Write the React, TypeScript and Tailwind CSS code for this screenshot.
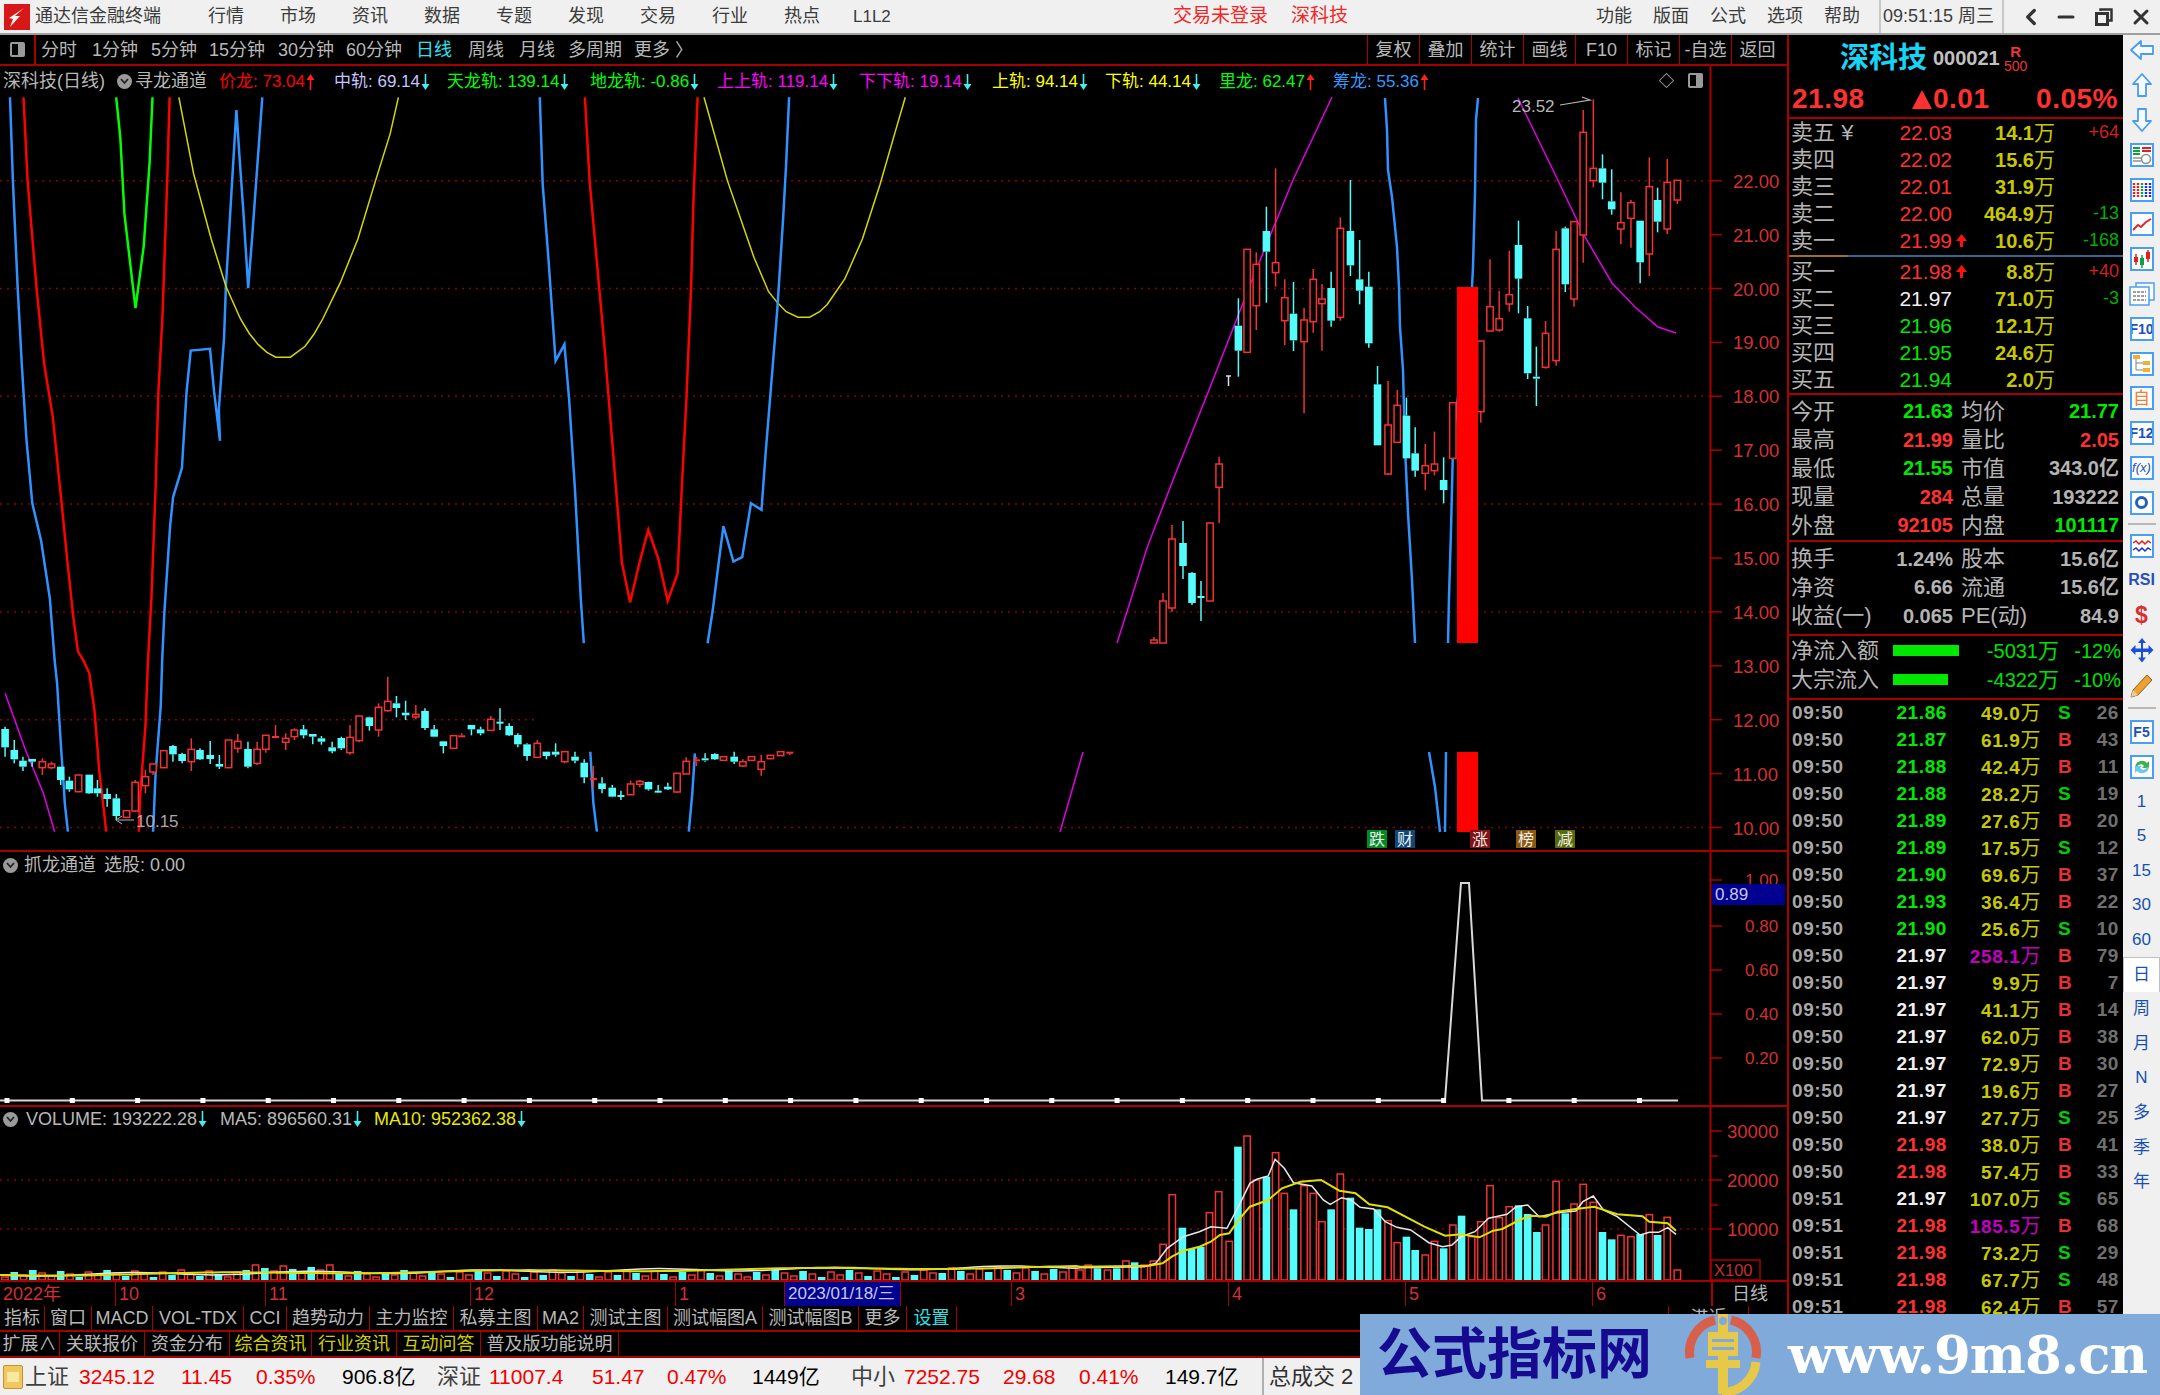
// App.tsx - stock terminal K-line screen
import React from "react";
import { ChevronLeft, Minus, X } from "lucide-react";

type Pt = [number, number];
type Candle = [number, number, number, number, number, number];

const z11 = (p: Pt): Pt => [p[0] * 0.5867, 90 + p[1] * 0.3635];
const z9 = (p: Pt): Pt => [p[0] / 1.96, 660 + p[1] / 3];
const z10 = (p: Pt): Pt => [1080 + p[0] / 2.178, 1100 + p[1] / 3];
const pts = (list: Pt[]) => list.map((p) => `${p[0].toFixed(1)},${p[1].toFixed(1)}`).join(" ");

const BLUE = "#2f93ff";
const RED = "#ff0000";
const MAG = "#e000e0";
const YEL = "#d8d800";
const CY = "#54fcfc";
const CR = "#f03232";

const mainLines: { c: string; w: number; p: Pt[] }[] = [
  { c: BLUE, w: 2.5, p: [...([[17, 20], [22, 250], [30, 540], [37, 750], [45, 960], [55, 1137], [70, 1240], [85, 1400], [93, 1568]] as Pt[]).map(z11), ...([[112, 70], [115, 150], [120, 270], [125, 380], [127, 430], [133, 515]] as Pt[]).map(z9)] },
  { c: RED, w: 2.5, p: [...([[40, 20], [47, 250], [62, 540], [75, 750], [90, 900], [105, 1137], [115, 1300], [125, 1450], [133, 1545], [142, 1568]] as Pt[]).map(z11), ...([[175, 40], [185, 150], [195, 340], [205, 470], [208, 515]] as Pt[]).map(z9)] },
  { c: RED, w: 2.5, p: [...([[272, 515], [275, 400], [285, 200], [290, 0]] as Pt[]).map(z9), ...([[258, 1400], [265, 1100], [270, 830], [277, 620], [285, 250], [289, 20]] as Pt[]).map(z11)] },
  { c: BLUE, w: 2.5, p: [...([[300, 515], [305, 340], [315, 140], [318, 0]] as Pt[]).map(z9), ...([[280, 1440], [290, 1200], [295, 1120], [310, 1040], [318, 830], [325, 717], [358, 712], [365, 830], [375, 965], [373, 880], [382, 680], [385, 540], [395, 270], [403, 55], [408, 180], [415, 340], [423, 545], [430, 400], [438, 220], [447, 20]] as Pt[]).map(z11)] },
  { c: "#00ff00", w: 2.5, p: ([[198, 20], [205, 130], [212, 340], [225, 520], [231, 600], [245, 430], [255, 200], [260, 20]] as Pt[]).map(z11) },
  { c: YEL, w: 1.5, p: ([[305, 20], [330, 230], [360, 410], [385, 540], [410, 630], [425, 670], [440, 700], [455, 722], [470, 735], [495, 735], [520, 705], [535, 672], [550, 630], [580, 530], [610, 410], [640, 250], [665, 120], [679, 20]] as Pt[]).map(z11) },
  { c: YEL, w: 1.5, p: ([[1200, 20], [1240, 250], [1285, 460], [1310, 555], [1325, 585], [1340, 610], [1360, 625], [1380, 625], [1397, 610], [1410, 590], [1440, 520], [1470, 410], [1500, 260], [1525, 120], [1543, 20]] as Pt[]).map(z11) },
  { c: BLUE, w: 2.5, p: ([[920, 20], [925, 260], [935, 470], [945, 700], [947, 745], [962, 700], [970, 850], [980, 1100], [985, 1250], [990, 1400], [995, 1522]] as Pt[]).map(z11) },
  { c: RED, w: 2.5, p: ([[997, 20], [1005, 250], [1020, 520], [1030, 700], [1040, 900], [1052, 1137], [1060, 1300], [1074, 1410], [1090, 1300], [1105, 1210], [1122, 1290], [1138, 1405], [1155, 1330], [1162, 1100], [1170, 850], [1178, 540], [1182, 300], [1189, 20]] as Pt[]).map(z11) },
  { c: BLUE, w: 2.5, p: ([[1206, 1522], [1215, 1430], [1225, 1300], [1233, 1200], [1250, 1297], [1265, 1285], [1280, 1137], [1298, 1155], [1305, 1000], [1315, 800], [1325, 600], [1335, 350], [1340, 200], [1345, 20]] as Pt[]).map(z11) },
  { c: BLUE, w: 2.5, p: ([[1157, 275], [1163, 430], [1170, 515]] as Pt[]).map(z9) },
  { c: BLUE, w: 2.5, p: ([[1350, 515], [1357, 400], [1362, 280]] as Pt[]).map(z9) },
  { c: MAG, w: 1.5, p: ([[10, 100], [50, 270], [85, 400], [107, 515]] as Pt[]).map(z9) },
  { c: MAG, w: 1.5, p: [[1060, 832], [1083, 752]] },
  { c: MAG, w: 1.5, p: [[1117, 643], [1137, 580], [1147, 548], [1173, 480], [1209, 390], [1252, 280], [1293, 180], [1332, 97]] },
  { c: MAG, w: 1.5, p: [[1518, 98], [1553, 170], [1585, 237], [1612, 283], [1635, 307], [1658, 327], [1676, 333]] },
  { c: BLUE, w: 2.5, p: [[1385, 98], [1387, 130], [1388, 170], [1392, 197], [1397, 247], [1399, 287], [1400, 327], [1403, 370], [1405, 447], [1408, 513], [1412, 580], [1415, 643]] },
  { c: BLUE, w: 2.5, p: [[1429, 752], [1435, 787], [1440, 832]] },
  { c: BLUE, w: 2.5, p: [[1445, 832], [1446, 752]] },
  { c: BLUE, w: 2.5, p: [[1448, 643], [1449, 597], [1451, 530], [1453, 447], [1456, 413], [1472, 287], [1473, 267], [1475, 193], [1476, 120], [1478, 98]] },
];

// x, wick top, body top, body bottom, wick bottom, 1 = red
const leftCandles: number[][] = [
  [10, 200, 207, 262, 290, 0], [28, 240, 270, 298, 310, 0], [45, 290, 302, 320, 333, 0], [63, 297, 297, 305, 320, 0], [83, 295, 305, 323, 345, 1], [101, 305, 312, 323, 328, 1], [119, 320, 320, 360, 375, 0], [136, 350, 362, 388, 395, 0], [154, 345, 345, 395, 397, 1], [175, 344, 344, 400, 402, 0], [191, 360, 385, 400, 410, 0], [210, 385, 402, 417, 440, 0], [228, 402, 415, 468, 480, 0], [248, 452, 452, 472, 475, 1], [265, 360, 367, 453, 455, 1], [285, 330, 350, 377, 400, 1], [300, 312, 312, 336, 345, 1], [321, 270, 272, 323, 324, 1], [339, 255, 258, 283, 305, 0], [357, 278, 282, 303, 310, 0], [375, 235, 268, 305, 333, 1], [392, 265, 270, 298, 300, 0], [412, 243, 285, 297, 312, 0], [430, 285, 312, 320, 327, 0], [448, 240, 240, 323, 325, 1], [466, 222, 244, 265, 278, 1], [486, 245, 267, 320, 325, 0], [504, 245, 268, 310, 315, 1], [521, 225, 226, 268, 278, 1], [540, 195, 228, 233, 235, 1], [560, 220, 235, 247, 270, 1], [577, 205, 210, 230, 240, 1], [595, 195, 208, 226, 235, 0], [613, 222, 222, 230, 253, 0], [630, 228, 235, 245, 254, 0], [651, 245, 262, 274, 280, 0], [669, 230, 234, 265, 270, 0], [686, 195, 232, 278, 284, 1], [704, 168, 168, 242, 247, 1], [724, 170, 172, 198, 212, 0], [742, 130, 142, 210, 230, 1], [760, 50, 124, 152, 155, 1], [777, 108, 130, 144, 172, 0], [795, 122, 158, 166, 180, 0], [815, 135, 163, 171, 178, 1], [833, 145, 153, 204, 210, 0], [851, 195, 208, 230, 232, 0], [869, 243, 244, 258, 280, 0], [889, 225, 227, 265, 267, 1], [905, 220, 226, 229, 231, 1], [924, 195, 195, 208, 226, 0], [942, 200, 208, 220, 226, 0], [962, 168, 178, 211, 213, 1], [980, 145, 185, 190, 210, 0], [998, 190, 198, 226, 228, 0], [1015, 220, 225, 253, 262, 0], [1033, 250, 253, 288, 302, 0], [1053, 240, 250, 292, 294, 1], [1071, 275, 275, 288, 298, 0], [1089, 250, 275, 284, 290, 0], [1107, 275, 275, 305, 310, 1], [1127, 275, 290, 302, 310, 0], [1145, 298, 308, 352, 370, 0], [1163, 318, 354, 356, 385, 1], [1180, 352, 370, 387, 400, 0], [1200, 375, 383, 410, 412, 0], [1217, 392, 405, 409, 420, 0], [1236, 362, 372, 404, 406, 1], [1254, 360, 364, 373, 382, 1], [1271, 365, 366, 388, 392, 0], [1290, 375, 392, 396, 397, 0], [1309, 368, 380, 388, 390, 0], [1327, 338, 340, 396, 398, 1], [1345, 292, 304, 342, 343, 1], [1365, 290, 298, 305, 318, 1], [1382, 280, 295, 302, 305, 0], [1401, 280, 282, 298, 300, 0], [1418, 288, 290, 301, 302, 1], [1439, 275, 290, 305, 312, 0], [1456, 298, 305, 318, 320, 1], [1473, 290, 290, 301, 302, 1], [1492, 285, 305, 328, 347, 1], [1510, 285, 286, 296, 298, 1], [1530, 275, 275, 287, 288, 1], [1548, 275, 275, 280, 285, 1],
];

const rightCandles: number[][] = [
  [345, 655, 737, 812, 890, 0], [364, 508, 508, 817, 817, 1], [384, 517, 553, 677, 750, 1], [406, 380, 453, 515, 668, 0], [426, 265, 548, 578, 620, 1], [446, 598, 653, 722, 795, 1], [465, 606, 701, 781, 813, 0], [488, 683, 720, 785, 1000, 1], [508, 567, 598, 725, 758, 1], [527, 612, 657, 671, 812, 1], [547, 575, 624, 722, 740, 0], [567, 412, 445, 712, 722, 1], [589, 300, 453, 556, 588, 0], [609, 480, 598, 632, 673, 0], [629, 575, 620, 790, 803, 0], [648, 858, 913, 1096, 1096, 0], [671, 903, 1035, 1182, 1185, 1], [691, 930, 976, 1087, 1087, 1], [711, 953, 1007, 1135, 1135, 0], [730, 1042, 1120, 1172, 1190, 0], [752, 1092, 1157, 1180, 1230, 1], [772, 1055, 1152, 1172, 1186, 1], [792, 1132, 1200, 1230, 1270, 0], [812, 968, 968, 1135, 1135, 1], [873, 783, 783, 995, 1028, 1], [893, 538, 680, 753, 753, 1], [913, 633, 716, 750, 755, 1], [935, 512, 644, 672, 695, 1], [955, 422, 495, 596, 700, 0], [975, 678, 715, 880, 897, 0], [994, 800, 890, 897, 978, 0], [1014, 723, 760, 862, 866, 1], [1037, 453, 508, 842, 857, 1], [1057, 440, 445, 613, 636, 0], [1076, 422, 425, 657, 680, 1], [1096, 90, 157, 465, 548, 1], [1118, 58, 265, 302, 322, 1], [1138, 223, 265, 308, 358, 0], [1158, 268, 364, 388, 404, 0], [1178, 337, 428, 447, 493, 1], [1200, 360, 368, 415, 503, 1], [1220, 422, 422, 547, 610, 0], [1240, 232, 320, 522, 588, 1], [1258, 323, 360, 425, 457, 0], [1279, 237, 307, 447, 462, 1], [1301, 301, 301, 360, 372, 1], [303, 1130, 1152, 1222, 1330, 1],
];

const lowCandles: Candle[] = [
  [1154, 637, 640, 643, 643, 1], [1163, 593, 601, 643, 643, 1], [1172, 525, 539, 608, 612, 1], [1183, 521, 543, 566, 579, 0], [1192, 572, 573, 603, 605, 0], [1201, 581, 596, 598, 621, 0], [1210, 523, 523, 601, 601, 1],
];

const candleList: Candle[] = [
  ...leftCandles.map((c) => [c[0] / 1.96, ...[c[1], c[2], c[3], c[4]].map((y) => 660 + y / 3), c[5]] as Candle),
  ...rightCandles.map((c) => [1080 + c[0] / 2.178, ...[c[1], c[2], c[3], c[4]].map((y) => Math.max(97, 80 + y / 3)), c[5]] as Candle),
  ...lowCandles,
];

const CandleMark = ({ c }: { c: Candle }) => {
  const [x, wt, bt, bb, wb, up] = c;
  const color = up ? CR : CY;
  const flat = bb - bt < 2.5;
  return (
    <g>
      <line x1={x} x2={x} y1={wt} y2={bt} stroke={color} strokeWidth="1.5" />
      <line x1={x} x2={x} y1={bb} y2={wb} stroke={color} strokeWidth="1.5" />
      {flat ? (
        <rect x={x - 3.5} y={bt} width="7" height="2" fill={color} />
      ) : up ? (
        <rect x={x - 3.2} y={bt} width="6.4" height={bb - bt} fill="#000" stroke={color} strokeWidth="1.5" />
      ) : (
        <rect x={x - 3.8} y={bt} width="7.6" height={bb - bt} fill={color} />
      )}
    </g>
  );
};

const priceY = (p: number) => 180.7 + (22 - p) * 53.9;
const prices = [22, 21, 20, 19, 18, 17, 16, 15, 14, 13, 12, 11, 10];
const newsTags = [
  { t: "跌", x: 1367, bg: "#008a20" },
  { t: "财", x: 1395, bg: "#0e4878" },
  { t: "涨", x: 1470, bg: "#801414" },
  { t: "榜", x: 1516, bg: "#8a5a10" },
  { t: "减", x: 1555, bg: "#5a6a08" },
];

const MainChart = () => (
  <svg className="block" width="1787" height="786" viewBox="0 66 1787 786">
    <line x1="1710.5" x2="1710.5" y1="66" y2="851" stroke="#a80000" strokeWidth="2" />
    {[22, 20, 18, 16, 14, 10].map((p) => (
      <line key={p} x1="0" x2="1710" y1={priceY(p)} y2={priceY(p)} stroke="#8c0000" strokeWidth="1.5" strokeDasharray="2 5" />
    ))}
    <line x1="0" x2="538" y1={priceY(12)} y2={priceY(12)} stroke="#8c0000" strokeWidth="1.5" strokeDasharray="2 5" />
    {mainLines.map((l, i) => (
      <polyline key={i} points={pts(l.p)} fill="none" stroke={l.c} strokeWidth={l.w} />
    ))}
    {candleList.map((c, i) => (
      <CandleMark key={i} c={c} />
    ))}
    <rect x="1457" y="287" width="21" height="356" fill="#ff0000" />
    <rect x="1457" y="752" width="21" height="80" fill="#ff0000" />
    {prices.map((p) => (
      <g key={p}>
        <line x1="1711" x2="1722" y1={priceY(p)} y2={priceY(p)} stroke="#a80000" strokeWidth="1.5" />
        <text x="1733" y={priceY(p) + 7} fontSize="18.5" fill="#d23030">
          {p.toFixed(2)}
        </text>
      </g>
    ))}
    <line x1="1226" x2="1231" y1="376" y2="376" stroke="#e0e0e0" strokeWidth="1.5" />
    <line x1="1228.5" x2="1228.5" y1="376" y2="386" stroke="#e0e0e0" strokeWidth="1.5" />
    <text x="1512" y="112" fontSize="17" fill="#b8b8b8">23.52</text>
    <polyline points="1560,105 1590,100 1582,97" fill="none" stroke="#b8b8b8" strokeWidth="1.2" />
    <line x1="118" x2="134" y1="820" y2="820" stroke="#b8b8b8" strokeWidth="1" />
    <polyline points="122,816 116,820 122,824" fill="none" stroke="#b8b8b8" strokeWidth="1" />
    <text x="136" y="827" fontSize="17" fill="#a8a8a8">10.15</text>
    {newsTags.map((n) => (
      <g key={n.t}>
        <rect x={n.x} y="830" width="20" height="18" fill={n.bg} />
        <text x={n.x + 2} y="845" fontSize="16" fill="#f0f0f0">
          {n.t}
        </text>
      </g>
    ))}
    <line x1="0" x2="1787" y1="851" y2="851" stroke="#a80000" strokeWidth="2" />
  </svg>
);

const SubChart = () => {
  const squares = Array.from({ length: 26 }, (_, i) => 7 + 65.3 * i).filter((x) => x < 1660 && !(x > 1450 && x < 1480));
  return (
    <svg className="block" width="1787" height="255" viewBox="0 852 1787 255">
      <line x1="1710.5" x2="1710.5" y1="852" y2="1106" stroke="#a80000" strokeWidth="2" />
      <polyline points="0,1100.5 1445,1100.5 1461,883 1469,883 1482,1100.5 1678,1100.5" fill="none" stroke="#d8d8d8" strokeWidth="2" />
      {squares.map((x) => (
        <rect key={x} x={x - 2.5} y="1098" width="5" height="5" fill="#fff" />
      ))}
      {[
        ["1.00", 880],
        ["0.80", 926],
        ["0.60", 970],
        ["0.40", 1014],
        ["0.20", 1058],
      ].map(([t, y]) => (
        <g key={t as string}>
          <line x1="1711" x2="1722" y1={y as number} y2={y as number} stroke="#a80000" strokeWidth="1.5" />
          <text x="1745" y={(y as number) + 6} fontSize="17" fill="#d23030">
            {t}
          </text>
        </g>
      ))}
      <rect x="1712" y="884" width="73" height="21" fill="#000090" />
      <text x="1715" y="900" fontSize="17" fill="#c8c8e8">0.89</text>
      <line x1="0" x2="1787" y1="1106" y2="1106" stroke="#a80000" strokeWidth="2" />
    </svg>
  );
};

const rightBars: number[][] = [
  [0, 510, 1], [18, 495, 1], [38, 505, 0], [60, 510, 1], [80, 505, 0], [100, 483, 1], [119, 487, 0], [140, 495, 1], [160, 483, 1], [181, 433, 1], [201, 284, 1], [223, 383, 0], [243, 447, 0], [263, 440, 0], [282, 338, 1], [302, 275, 1], [325, 424, 1], [344, 140, 0], [364, 108, 1], [384, 240, 1], [406, 230, 0], [426, 158, 1], [445, 280, 1], [465, 328, 0], [488, 257, 1], [508, 280, 1], [527, 365, 1], [547, 328, 0], [567, 222, 1], [589, 293, 0], [609, 383, 0], [629, 387, 0], [648, 328, 0], [671, 362, 1], [691, 428, 1], [711, 410, 0], [730, 450, 0], [752, 465, 1], [772, 424, 1], [792, 445, 0], [812, 375, 1], [831, 347, 0], [853, 410, 1], [873, 365, 1], [893, 257, 1], [913, 353, 1], [935, 320, 1], [955, 316, 0], [975, 342, 0], [995, 396, 0], [1014, 375, 1], [1037, 244, 1], [1057, 340, 0], [1076, 312, 1], [1096, 253, 1], [1118, 307, 1], [1138, 396, 0], [1158, 418, 0], [1178, 406, 1], [1200, 410, 1], [1220, 402, 0], [1240, 344, 1], [1258, 405, 0], [1279, 352, 1], [1301, 510, 1],
];
const ma5: Pt[] = [[0, 503], [140, 500], [165, 490], [190, 445], [225, 410], [260, 395], [285, 380], [320, 385], [345, 320], [370, 250], [385, 238], [410, 228], [425, 178], [445, 205], [465, 248], [505, 258], [530, 300], [545, 313], [570, 293], [590, 300], [610, 322], [640, 327], [665, 365], [690, 382], [720, 390], [760, 428], [790, 440], [810, 435], [830, 410], [860, 395], [890, 355], [930, 343], [950, 320], [975, 315], [1000, 350], [1040, 338], [1080, 333], [1095, 305], [1118, 288], [1140, 330], [1170, 350], [1220, 405], [1240, 397], [1260, 397], [1280, 383], [1298, 403]];
const ma10: Pt[] = [[0, 500], [150, 497], [180, 490], [200, 470], [225, 452], [260, 440], [285, 425], [305, 405], [325, 400], [345, 360], [370, 320], [410, 300], [440, 265], [480, 245], [525, 240], [565, 272], [600, 280], [630, 313], [670, 322], [720, 358], [750, 380], [795, 407], [830, 403], [870, 412], [900, 392], [920, 387], [960, 358], [985, 347], [1015, 350], [1040, 335], [1080, 327], [1120, 320], [1170, 343], [1225, 349], [1240, 365], [1280, 370], [1298, 392]];

const VolumeChart = () => {
  const leftBars = Array.from({ length: 116 }, (_, i) => ({
    x: 5 + 9.28 * i,
    h: 3 + ((i * 37) % 8) + (i > 25 && i < 36 ? 5 : 0) + (i > 100 ? 3 : 0),
    red: (i * 13) % 5 < 3,
  }));
  const leftLine = (a: number, b: number) =>
    Array.from({ length: 117 }, (_, i): Pt => [9.28 * i, 1275 - (i / 116) * 8 + a * Math.sin(i / b)]);
  return (
    <svg className="block" width="1787" height="175" viewBox="0 1107 1787 175">
      <line x1="1710.5" x2="1710.5" y1="1107" y2="1282" stroke="#a80000" strokeWidth="2" />
      {[1180, 1229].map((y) => (
        <line key={y} x1="0" x2="1710" y1={y} y2={y} stroke="#8c0000" strokeWidth="1.5" strokeDasharray="2 5" />
      ))}
      {leftBars.map((b) =>
        b.red ? (
          <rect key={b.x} x={b.x - 3.2} y={1280 - b.h} width="6.4" height={b.h} fill="#000" stroke={CR} strokeWidth="1.5" />
        ) : (
          <rect key={b.x} x={b.x - 3.8} y={1280 - b.h} width="7.6" height={b.h} fill={CY} />
        )
      )}
      {rightBars.map((b) => {
        const [x, y] = z10([b[0], b[1]]);
        return b[2] ? (
          <rect key={b[0]} x={x - 3.2} y={y} width="6.4" height={1280 - y} fill="#000" stroke={CR} strokeWidth="1.5" />
        ) : (
          <rect key={b[0]} x={x - 3.8} y={y} width="7.6" height={1280 - y} fill={CY} />
        );
      })}
      <polyline points={pts([...leftLine(1.5, 3), ...ma5.map(z10)])} fill="none" stroke="#e8e8e8" strokeWidth="1.5" />
      <polyline points={pts([...leftLine(1, 5), ...ma10.map(z10)])} fill="none" stroke="#e0e000" strokeWidth="2" />
      {[
        ["30000", 1131],
        ["20000", 1180],
        ["10000", 1229],
      ].map(([t, y]) => (
        <g key={t as string}>
          <line x1="1711" x2="1722" y1={y as number} y2={y as number} stroke="#a80000" strokeWidth="1.5" />
          <text x="1727" y={(y as number) + 7} fontSize="18.5" fill="#d23030">
            {t}
          </text>
        </g>
      ))}
      <line x1="1711" x2="1718" y1="1156" y2="1156" stroke="#a80000" strokeWidth="1.5" />
      <line x1="1711" x2="1718" y1="1205" y2="1205" stroke="#a80000" strokeWidth="1.5" />
      <rect x="1711" y="1260" width="49" height="20" fill="#000" stroke="#a80000" strokeWidth="1.5" />
      <text x="1714" y="1276" fontSize="16.5" fill="#c03030">X100</text>
      <line x1="0" x2="1787" y1="1281" y2="1281" stroke="#a80000" strokeWidth="2" />
    </svg>
  );
};

const Dot = () => (
  <span className="flex h-[15px] w-[15px] items-center justify-center rounded-full bg-[#9a9a9a]">
    <svg width="9" height="7" viewBox="0 0 9 7">
      <polyline points="1,1 4.5,5 8,1" fill="none" stroke="#222" strokeWidth="1.8" />
    </svg>
  </span>
);

const Arw = ({ up }: { up?: boolean }) => (
  <svg className="ml-[1px] inline-block shrink-0" width="9" height="18" viewBox="0 0 9 18">
    <path d={up ? "M4.5 1 L8.5 7 H5.3 V17 H3.7 V7 H0.5 Z" : "M4.5 17 L8.5 11 H5.3 V1 H3.7 V11 H0.5 Z"} fill={up ? "#ff2020" : "#40f0f0"} />
  </svg>
);

const TopBar = () => (
  <div className="flex h-[35px] items-center border-b-2 border-[#a0a0a0] bg-[#f0f0f0] text-[18px] text-[#3c3c3c]">
    <svg className="ml-[4px]" width="26" height="26" viewBox="0 0 26 26">
      <rect width="26" height="26" fill="#d81818" />
      <path d="M20 4 L11 12 L16 12 L6 23 L9 15 L5 14 Z" fill="#f4f4f4" />
    </svg>
    <span className="ml-[5px] w-[173px]">通达信金融终端</span>
    <div className="flex gap-[36px]">
      {["行情", "市场", "资讯", "数据", "专题", "发现", "交易", "行业", "热点"].map((m) => (
        <span key={m}>{m}</span>
      ))}
    </div>
    <span className="ml-[33px] w-[320px] text-[17px]">L1L2</span>
    <span className="w-[118px] text-[19px] text-[#f02828]">交易未登录</span>
    <span className="w-[305px] text-[19px] text-[#f02828]">深科技</span>
    <div className="flex gap-[21px]">
      {["功能", "版面", "公式", "选项", "帮助"].map((m) => (
        <span key={m}>{m}</span>
      ))}
    </div>
    <div className="ml-[19px] flex h-full w-[125px] items-center whitespace-nowrap border-x-2 border-[#c8c8c8] pl-[2px] text-[18px]">
      09:51:15&nbsp;周三
    </div>
    <ChevronLeft className="ml-[14px]" size={26} strokeWidth={3} color="#333" />
    <Minus className="ml-[10px]" size={24} strokeWidth={3} color="#333" />
    <svg className="ml-[17px]" width="18" height="18" viewBox="0 0 18 18">
      <rect x="1.5" y="5.5" width="11" height="11" fill="none" stroke="#333" strokeWidth="3" />
      <path d="M5.5 3 V1.5 H16.5 V12.5 H14" fill="none" stroke="#333" strokeWidth="2.5" />
    </svg>
    <X className="ml-[16px]" size={24} strokeWidth={3} color="#333" />
  </div>
);

const periods = [
  { t: "分时", w: "w-[51px]" },
  { t: "1分钟", w: "w-[59px]" },
  { t: "5分钟", w: "w-[58px]" },
  { t: "15分钟", w: "w-[69px]" },
  { t: "30分钟", w: "w-[68px]" },
  { t: "60分钟", w: "w-[70px]" },
  { t: "日线", w: "w-[52px]", on: true },
  { t: "周线", w: "w-[51px]" },
  { t: "月线", w: "w-[49px]" },
  { t: "多周期", w: "w-[66px]" },
  { t: "更多 〉", w: "w-[60px]" },
];

const PeriodBar = () => (
  <div className="flex h-[31px] items-center border-b-2 border-[#a80000] bg-black text-[18px] text-[#b8b8b8]">
    <div className="flex h-full w-[36px] items-center justify-center border-r-2 border-[#a80000]">
      <span className="flex h-[15px] w-[15px] justify-end rounded-[2px] border-2 border-[#9a9a9a]">
        <span className="w-[5px] bg-[#9a9a9a]" />
      </span>
    </div>
    <div className="ml-[5px] flex whitespace-nowrap pt-[2px]">
      {periods.map((p) => (
        <span key={p.t} className={`${p.w} ${p.on ? "text-[#30e0f0]" : ""}`}>
          {p.t}
        </span>
      ))}
    </div>
    <div className="ml-auto mr-[4px] flex h-full">
      {["复权", "叠加", "统计", "画线", "F10", "标记", "-自选", "返回"].map((t) => (
        <span key={t} className="flex w-[52px] items-center justify-center whitespace-nowrap border-l border-[#a80000] pt-[2px]">
          {t}
        </span>
      ))}
    </div>
  </div>
);

const legendItems = [
  { n: "价龙", v: "73.04", c: "text-[#ff0000]", w: "w-[115px]", up: true },
  { n: "中轨", v: "69.14", c: "text-[#c4c4ff]", w: "w-[113px]" },
  { n: "天龙轨", v: "139.14", c: "text-[#00ff00]", w: "w-[143px]" },
  { n: "地龙轨", v: "-0.86", c: "text-[#00ff00]", w: "w-[127px]" },
  { n: "上上轨", v: "119.14", c: "text-[#ff00ff]", w: "w-[142px]" },
  { n: "下下轨", v: "19.14", c: "text-[#ff00ff]", w: "w-[133px]" },
  { n: "上轨", v: "94.14", c: "text-[#ffff00]", w: "w-[113px]" },
  { n: "下轨", v: "44.14", c: "text-[#ffff00]", w: "w-[114px]" },
  { n: "里龙", v: "62.47", c: "text-[#00ff00]", w: "w-[114px]", up: true },
  { n: "筹龙", v: "55.36", c: "text-[#3399ff]", w: "w-[114px]", up: true },
];

const MainLegend = () => (
  <div className="absolute left-0 top-0 flex h-[31px] w-[1710px] items-center whitespace-nowrap text-[17px] text-[#b8b8b8]">
    <span className="ml-[3px] w-[114px] text-[18px]">深科技(日线)</span>
    <Dot />
    <span className="ml-[3px] w-[84px] text-[18px]">寻龙通道</span>
    {legendItems.map((l) => (
      <span key={l.n} className={`${l.w} flex items-center ${l.c}`}>
        {l.n}: {l.v}
        <Arw up={l.up} />
      </span>
    ))}
    <span className="absolute left-[1661px] top-[9px] h-[11px] w-[11px] rotate-45 border border-[#888]" />
    <span className="absolute left-[1688px] top-[7px] flex h-[15px] w-[15px] justify-end rounded-[2px] border-2 border-[#9a9a9a]">
      <span className="w-[5px] bg-[#9a9a9a]" />
    </span>
  </div>
);

const dates = [
  { t: "2022年", w: "w-[115px]" },
  { t: "10", w: "w-[150px]" },
  { t: "11", w: "w-[205px]" },
  { t: "12", w: "w-[205px]" },
  { t: "1", w: "w-[109px]" },
  { t: "2023/01/18/三", w: "w-[116px]", on: true },
  { t: "", w: "w-[111px]" },
  { t: "3", w: "w-[217px]" },
  { t: "4", w: "w-[177px]" },
  { t: "5", w: "w-[187px]" },
  { t: "6", w: "w-[119px]" },
];

const DateAxis = () => (
  <div className="flex h-[24px] bg-black text-[18px] text-[#d23030]">
    {dates.map((d, i) => (
      <span
        key={i}
        className={`${d.w} flex items-center overflow-hidden whitespace-nowrap pl-[3px] ${i > 0 ? "border-l border-[#a80000]" : ""} ${d.on ? "bg-[#000090] text-[17px] text-[#c8c8e8]" : ""}`}
      >
        {d.t}
      </span>
    ))}
    <span className="flex w-[76px] items-center justify-center border-l-2 border-[#a80000] text-[#b8b8b8]">日线</span>
  </div>
);

const tabsOne = [
  { t: "指标", w: "w-[45px]" },
  { t: "窗口", w: "w-[47px]" },
  { t: "MACD", w: "w-[61px]" },
  { t: "VOL-TDX", w: "w-[91px]" },
  { t: "CCI", w: "w-[43px]" },
  { t: "趋势动力", w: "w-[83px]" },
  { t: "主力监控", w: "w-[84px]" },
  { t: "私募主图", w: "w-[84px]" },
  { t: "MA2", w: "w-[46px]" },
  { t: "测试主图", w: "w-[84px]" },
  { t: "测试幅图A", w: "w-[95px]" },
  { t: "测试幅图B", w: "w-[96px]" },
  { t: "更多", w: "w-[48px]" },
  { t: "设置", w: "w-[50px]", c: "text-[#30e0e0]" },
  { t: "", w: "w-[712px]" },
  { t: "港近", w: "w-[80px]" },
];
const tabsTwo = [
  { t: "扩展∧", w: "w-[60px]" },
  { t: "关联报价", w: "w-[85px]" },
  { t: "资金分布", w: "w-[85px]" },
  { t: "综合资讯", w: "w-[82px]", c: "text-[#d0d000]" },
  { t: "行业资讯", w: "w-[85px]", c: "text-[#d0d000]" },
  { t: "互动问答", w: "w-[84px]", c: "text-[#d0d000]" },
  { t: "普及版功能说明", w: "w-[138px]" },
];

const TabRow = ({ items }: { items: { t: string; w: string; c?: string }[] }) => (
  <div className="flex h-[26px] border-b-2 border-[#a80000] bg-black text-[18px] text-[#b8b8b8]">
    {items.map((t) => (
      <span key={t.t} className={`${t.w} ${t.c ?? ""} flex items-center justify-center whitespace-nowrap border-r border-[#a80000]`}>
        {t.t}
      </span>
    ))}
  </div>
);

const statusItems = [
  { t: "上证", w: "w-[54px]", c: "text-[22px] text-[#404040]" },
  { t: "3245.12", w: "w-[102px]", c: "text-[#f00000]" },
  { t: "11.45", w: "w-[75px]", c: "text-[#f00000]" },
  { t: "0.35%", w: "w-[86px]", c: "text-[#f00000]" },
  { t: "906.8亿", w: "w-[95px]", c: "text-black" },
  { t: "深证", w: "w-[52px]", c: "text-[22px] text-[#404040]" },
  { t: "11007.4", w: "w-[103px]", c: "text-[#f00000]" },
  { t: "51.47", w: "w-[75px]", c: "text-[#f00000]" },
  { t: "0.47%", w: "w-[85px]", c: "text-[#f00000]" },
  { t: "1449亿", w: "w-[99px]", c: "text-black" },
  { t: "中小", w: "w-[53px]", c: "text-[22px] text-[#404040]" },
  { t: "7252.75", w: "w-[99px]", c: "text-[#f00000]" },
  { t: "29.68", w: "w-[76px]", c: "text-[#f00000]" },
  { t: "0.41%", w: "w-[86px]", c: "text-[#f00000]" },
  { t: "149.7亿", w: "w-[97px]", c: "text-black" },
];

const StatusBar = () => (
  <div className="flex h-[37px] items-center whitespace-nowrap bg-[#f0f0f0] text-[21px]">
    <span className="ml-[3px] mr-[2px] flex h-[24px] w-[20px] items-center justify-center rounded-[2px] border border-[#c89030] bg-[#f0c860]">
      <span className="h-[10px] w-[12px] bg-[#f8e8a0]" />
    </span>
    {statusItems.map((s) => (
      <span key={s.t} className={`${s.w} ${s.c}`}>
        {s.t}
      </span>
    ))}
    <span className="flex h-full w-[97px] items-center overflow-hidden border-l-2 border-[#b0b0b0] pl-[5px] text-[22px] text-[#303030]">总成交 2</span>
  </div>
);

const QuoteHead = () => (
  <div className="flex h-[84px] flex-col border-b-2 border-[#a80000]">
    <div className="flex h-[46px] items-center pl-[51px]">
      <span className="w-[93px] text-[29px] font-bold leading-none text-[#18d4f4]">深科技</span>
      <span className="w-[71px] text-[20px] font-bold text-[#c0c0c0]">000021</span>
      <span className="flex flex-col items-center leading-none text-[#e83838]">
        <b className="text-[15px]">R</b>
        <span className="text-[14px]">500</span>
      </span>
    </div>
    <div className="flex h-[36px] items-center pl-[3px] pr-[5px] text-[28px] font-bold leading-none text-[#ff3030]">
      <span className="w-[120px] tracking-[0.5px]">21.98</span>
      <span className="mr-[1px] h-0 w-0 border-x-[10px] border-b-[19px] border-x-transparent border-b-[#ff3030]" />
      <span className="tracking-[0.5px]">0.01</span>
      <span className="ml-auto tracking-[0.5px]">0.05%</span>
    </div>
  </div>
);

const GRAY = "text-[#b4b4b4]";
const C_R = "text-[#ff3030]";
const C_G = "text-[#00e800]";
const C_W = "text-[#f0f0f0]";
const C_Y = "text-[#c8c800]";

const sells = [
  { l: "卖五", x: " ¥", p: "22.03", c: C_R, v: "14.1", d: "+64", dc: "text-[#d02020]" },
  { l: "卖四", p: "22.02", c: C_R, v: "15.6" },
  { l: "卖三", p: "22.01", c: C_R, v: "31.9" },
  { l: "卖二", p: "22.00", c: C_R, v: "464.9", d: "-13", dc: "text-[#00b000]" },
  { l: "卖一", p: "21.99", c: C_R, v: "10.6", d: "-168", dc: "text-[#00b000]", up: true },
];
const buys = [
  { l: "买一", p: "21.98", c: C_R, v: "8.8", d: "+40", dc: "text-[#d02020]", up: true },
  { l: "买二", p: "21.97", c: C_W, v: "71.0", d: "-3", dc: "text-[#00b000]" },
  { l: "买三", p: "21.96", c: C_G, v: "12.1" },
  { l: "买四", p: "21.95", c: C_G, v: "24.6" },
  { l: "买五", p: "21.94", c: C_G, v: "2.0" },
];

type Level = { l: string; x?: string; p: string; c: string; v: string; d?: string; dc?: string; up?: boolean };

const LevelRow = ({ r }: { r: Level }) => (
  <div className="flex h-[27px] items-center pl-[2px] pr-[4px]">
    <span className={`w-[92px] whitespace-nowrap text-[22px] ${GRAY}`}>
      {r.l}
      {r.x}
    </span>
    <span className={`w-[69px] text-right text-[21px] ${r.c}`}>{r.p}</span>
    <span className="flex w-[19px] items-center justify-center">
      {r.up && (
        <svg width="13" height="15" viewBox="0 0 13 15">
          <path d="M6.5 1 L12 8 H8 V14 H5 V8 H1 Z" fill="#ff1010" />
        </svg>
      )}
    </span>
    <span className={`w-[84px] whitespace-nowrap text-right text-[20px] font-bold ${C_Y}`}>
      {r.v}
      <span className="text-[21px] font-normal">万</span>
    </span>
    <span className={`flex-1 text-right text-[18px] ${r.dc ?? ""}`}>{r.d}</span>
  </div>
);

const stats = [
  ["今开", "21.63", C_G, "均价", "21.77", C_G],
  ["最高", "21.99", C_R, "量比", "2.05", C_R],
  ["最低", "21.55", C_G, "市值", "343.0亿", GRAY],
  ["现量", "284", C_R, "总量", "193222", GRAY],
  ["外盘", "92105", C_R, "内盘", "101117", C_G],
];
const stats2 = [
  ["换手", "1.24%", GRAY, "股本", "15.6亿", GRAY],
  ["净资", "6.66", GRAY, "流通", "15.6亿", GRAY],
  ["收益(一)", "0.065", GRAY, "PE(动)", "84.9", GRAY],
];

const StatRow = ({ r }: { r: string[] }) => (
  <div className="flex h-[28.5px] items-center pl-[2px] pr-[4px]">
    <span className={`w-[90px] whitespace-nowrap text-[22px] ${GRAY}`}>{r[0]}</span>
    <span className={`w-[72px] whitespace-nowrap text-right text-[20px] font-bold ${r[2]}`}>{r[1]}</span>
    <span className={`ml-[8px] w-[62px] whitespace-nowrap text-[22px] ${GRAY}`}>{r[3]}</span>
    <span className={`flex-1 whitespace-nowrap text-right text-[20px] font-bold ${r[5]}`}>{r[4]}</span>
  </div>
);

const ticks: [string, string, string, string, string, string, string][] = [
  ["09:50", "21.86", C_G, "49.0", "S", "26", ""],
  ["09:50", "21.87", C_G, "61.9", "B", "43", ""],
  ["09:50", "21.88", C_G, "42.4", "B", "11", ""],
  ["09:50", "21.88", C_G, "28.2", "S", "19", ""],
  ["09:50", "21.89", C_G, "27.6", "B", "20", ""],
  ["09:50", "21.89", C_G, "17.5", "S", "12", ""],
  ["09:50", "21.90", C_G, "69.6", "B", "37", ""],
  ["09:50", "21.93", C_G, "36.4", "B", "22", ""],
  ["09:50", "21.90", C_G, "25.6", "S", "10", ""],
  ["09:50", "21.97", C_W, "258.1", "B", "79", "p"],
  ["09:50", "21.97", C_W, "9.9", "B", "7", ""],
  ["09:50", "21.97", C_W, "41.1", "B", "14", ""],
  ["09:50", "21.97", C_W, "62.0", "B", "38", ""],
  ["09:50", "21.97", C_W, "72.9", "B", "30", ""],
  ["09:50", "21.97", C_W, "19.6", "B", "27", ""],
  ["09:50", "21.97", C_W, "27.7", "S", "25", ""],
  ["09:50", "21.98", C_R, "38.0", "B", "41", ""],
  ["09:50", "21.98", C_R, "57.4", "B", "33", ""],
  ["09:51", "21.97", C_W, "107.0", "S", "65", ""],
  ["09:51", "21.98", C_R, "185.5", "B", "68", "p"],
  ["09:51", "21.98", C_R, "73.2", "S", "29", ""],
  ["09:51", "21.98", C_R, "67.7", "S", "48", ""],
  ["09:51", "21.98", C_R, "62.4", "B", "57", ""],
];

const TickRow = ({ r }: { r: (typeof ticks)[number] }) => (
  <div className="flex h-[27px] shrink-0 items-center pl-[3px] pr-[4px] text-[19px] font-bold tracking-[0.6px]">
    <span className="w-[80px] text-[#a8a8a8]">{r[0]}</span>
    <span className={`w-[75px] text-right ${r[2]}`}>{r[1]}</span>
    <span className={`w-[94px] whitespace-nowrap text-right ${r[6] ? "text-[#c000c0]" : C_Y}`}>
      {r[3]}
      <span className="text-[20px] font-normal">万</span>
    </span>
    <span className={`ml-[17px] w-[14px] ${r[4] === "S" ? "text-[#00d000]" : "text-[#e83030]"}`}>{r[4]}</span>
    <span className="flex-1 text-right text-[#707070]">{r[5]}</span>
  </div>
);

const QuotePanel = () => (
  <div className="flex h-full w-[336px] flex-col overflow-hidden border-l-2 border-[#a80000] bg-black">
    <QuoteHead />
    <div className="flex shrink-0 flex-col">
      {sells.map((r) => (
        <LevelRow key={r.l} r={r} />
      ))}
    </div>
    <div className="my-[1px] flex h-[2px] shrink-0">
      <span className="w-[59px] bg-[#a07020]" />
      <span className="flex-1 bg-[#306890]" />
    </div>
    <div className="flex shrink-0 flex-col border-b-2 border-[#a80000]">
      {buys.map((r) => (
        <LevelRow key={r.l} r={r} />
      ))}
    </div>
    <div className="flex shrink-0 flex-col border-b-2 border-[#a80000] pt-[2px]">
      {stats.map((r) => (
        <StatRow key={r[0]} r={r} />
      ))}
    </div>
    <div className="flex shrink-0 flex-col border-b-2 border-[#a80000] pb-[4px] pt-[3px]">
      {stats2.map((r) => (
        <StatRow key={r[0]} r={r} />
      ))}
    </div>
    <div className="flex shrink-0 flex-col border-b-2 border-[#a80000] pb-[4px] text-[#00e000]">
      {[
        { l: "净流入额", b: "w-[66px]", v: "-5031", p: "-12%" },
        { l: "大宗流入", b: "w-[55px]", v: "-4322", p: "-10%" },
      ].map((r) => (
        <div key={r.l} className="flex h-[29px] items-center pl-[2px] pr-[2px]">
          <span className={`w-[102px] text-[22px] ${GRAY}`}>{r.l}</span>
          <span className="w-[66px]">
            <span className={`block h-[11px] ${r.b} bg-[#00e800]`} />
          </span>
          <span className="w-[100px] whitespace-nowrap text-right text-[20px]">
            {r.v}
            <span className="text-[21px]">万</span>
          </span>
          <span className="flex-1 text-right text-[20px]">{r.p}</span>
        </div>
      ))}
    </div>
    <div className="flex flex-col">
      {ticks.map((r, i) => (
        <TickRow key={i} r={r} />
      ))}
    </div>
  </div>
);

const IconBox = ({ children }: { children: React.ReactNode }) => (
  <span className="flex h-[24px] w-[24px] items-center justify-center overflow-hidden border-2 border-[#4aa0f0] bg-white text-[14px] font-bold leading-none text-[#2050c0]">
    {children}
  </span>
);

const Arrow = ({ d }: { d: string }) => (
  <svg width="26" height="26" viewBox="0 0 26 26">
    <path d={d} fill="#f4faff" stroke="#4a9cf0" strokeWidth="1.8" strokeLinejoin="round" />
  </svg>
);

const railIcons: React.ReactNode[] = [
  <Arrow key="l" d="M2 13 L12 4 V9 H24 V17 H12 V22 Z" />,
  <Arrow key="u" d="M13 2 L22 12 H17 V24 H9 V12 H4 Z" />,
  <Arrow key="d" d="M13 24 L22 14 H17 V2 H9 V14 H4 Z" />,
  <IconBox key="a">
    <svg width="20" height="20" viewBox="0 0 20 20">
      <path d="M1 3h7M1 6h7M1 9h7" stroke="#10a040" strokeWidth="2" />
      <path d="M10 3h9M10 6h9" stroke="#e02020" strokeWidth="2" />
      <circle cx="14" cy="14" r="4.5" fill="none" stroke="#909090" strokeWidth="1.6" />
      <path d="M1 13h8M1 16h8" stroke="#909090" strokeWidth="1.6" />
    </svg>
  </IconBox>,
  <IconBox key="b">
    <svg width="20" height="20" viewBox="0 0 20 20">
      <path d="M2 3v14M6 3v14" stroke="#e02020" strokeWidth="2.4" strokeDasharray="2 1" />
      <path d="M10 3v14" stroke="#10a040" strokeWidth="2.4" strokeDasharray="2 1" />
      <path d="M14 3v14M18 3v14" stroke="#2030d0" strokeWidth="2.4" strokeDasharray="2 1" />
    </svg>
  </IconBox>,
  <IconBox key="c">
    <svg width="20" height="20" viewBox="0 0 20 20">
      <polyline points="1,16 6,11 9,13 14,8 19,5" fill="none" stroke="#e82020" strokeWidth="1.8" />
    </svg>
  </IconBox>,
  <IconBox key="k">
    <svg width="20" height="20" viewBox="0 0 20 20">
      <path d="M4 5v11" stroke="#e02020" strokeWidth="1.5" />
      <rect x="2" y="8" width="4" height="5" fill="#e02020" />
      <path d="M10 6v13" stroke="#10a040" strokeWidth="1.5" />
      <rect x="8" y="9" width="4" height="7" fill="#10a040" />
      <path d="M16 1v12" stroke="#e02020" strokeWidth="1.5" />
      <rect x="14" y="3" width="4" height="7" fill="#e02020" />
    </svg>
  </IconBox>,
  <svg key="docs" width="26" height="24" viewBox="0 0 26 24">
    <rect x="7" y="1" width="18" height="17" fill="#fff" stroke="#4aa0f0" strokeWidth="1.5" />
    <rect x="1" y="5" width="19" height="18" fill="#fff" stroke="#4aa0f0" strokeWidth="1.5" />
    <path d="M4 10h13M4 14h13M4 18h13" stroke="#808080" strokeWidth="1.6" strokeDasharray="3 1" />
  </svg>,
  <IconBox key="f10">F10</IconBox>,
  <IconBox key="tree">
    <svg width="20" height="20" viewBox="0 0 20 20">
      <rect x="1" y="1" width="7" height="4" fill="#f0b030" />
      <rect x="11" y="7" width="7" height="4" fill="#f0b030" />
      <rect x="11" y="14" width="7" height="4" fill="#f0b030" />
      <path d="M4 5v11h7M4 9h7" fill="none" stroke="#808080" />
    </svg>
  </IconBox>,
  <IconBox key="zi">
    <span className="text-[17px] font-normal text-[#f08030]">自</span>
  </IconBox>,
  <IconBox key="f12">F12</IconBox>,
  <IconBox key="fx">
    <span className="text-[13px] font-normal italic">f(x)</span>
  </IconBox>,
  <IconBox key="o">
    <span className="h-[13px] w-[13px] rounded-full border-[3px] border-[#2060c0]" />
  </IconBox>,
];

const railIconsTwo: React.ReactNode[] = [
  <IconBox key="w">
    <svg width="20" height="20" viewBox="0 0 20 20">
      <polyline points="1,7 4,5 7,8 10,5 13,8 16,5 19,7" fill="none" stroke="#e02020" strokeWidth="1.5" />
      <polyline points="1,14 4,12 7,15 10,12 13,15 16,12 19,14" fill="none" stroke="#2030d0" strokeWidth="1.5" />
    </svg>
  </IconBox>,
  <span key="rsi" className="text-[16px] font-bold text-[#2850b8]">RSI</span>,
  <span key="s" className="text-[23px] font-bold leading-none text-[#d83030]">$</span>,
  <svg key="m" width="26" height="26" viewBox="0 0 26 26">
    <path d="M13 1l4 5h-3v5.5H19.5V8l5 5-5 5v-3H14v5.5h3l-4 5-4-5h3V15H6.5v3l-5-5 5-5v3.5H12V6H9z" fill="#1850d8" />
  </svg>,
  <svg key="p" width="26" height="26" viewBox="0 0 26 26">
    <path d="M4 18 L18 3 L23 8 L9 23 L2 25 Z" fill="#f0a030" stroke="#806020" strokeWidth="1" />
    <path d="M2 25 L4 18 L9 23 Z" fill="#e8d0a0" />
  </svg>,
];

const railIconsThree: React.ReactNode[] = [
  <IconBox key="f5">F5</IconBox>,
  <IconBox key="r">
    <svg width="20" height="20" viewBox="0 0 20 20">
      <path d="M3 10a7 7 0 0 1 12-4l2-2v7h-7l2-2a4 4 0 0 0-7 1z" fill="#40b050" />
      <path d="M17 10a7 7 0 0 1-12 4l-2 2V9h7l-2 2a4 4 0 0 0 7-1z" fill="#70c8f0" />
    </svg>
  </IconBox>,
];

const railText = ["1", "5", "15", "30", "60", "日", "周", "月", "N", "多", "季", "年"];

const ToolRail = () => (
  <div className="flex h-full w-[37px] flex-col items-center overflow-hidden bg-[#f0f0f0]">
    <div className="-mt-[2px]" />
    {railIcons.map((ic, i) => (
      <div key={i} className="flex h-[34.8px] w-full shrink-0 items-center justify-center">
        {ic}
      </div>
    ))}
    <div className="my-[3px] h-[2px] w-[28px] shrink-0 bg-[#b8b8b8]" />
    {railIconsTwo.map((ic, i) => (
      <div key={i} className="flex h-[34.8px] w-full shrink-0 items-center justify-center">
        {ic}
      </div>
    ))}
    <div className="my-[5px] h-[2px] w-[28px] shrink-0 bg-[#b8b8b8]" />
    {railIconsThree.map((ic, i) => (
      <div key={i} className="flex h-[35px] w-full shrink-0 items-center justify-center">
        {ic}
      </div>
    ))}
    {railText.map((t) => (
      <span
        key={t}
        className={`flex h-[34.6px] w-full shrink-0 items-center justify-center text-[17px] text-[#1850b0] ${t === "日" ? "border-x border-t border-[#c0c0c0] bg-white" : ""}`}
      >
        {t}
      </span>
    ))}
  </div>
);

const Watermark = () => (
  <div className="absolute bottom-0 right-0 flex h-[81px] w-[800px] items-center bg-[#7faad9]">
    <span className="ml-[17px] w-[303px] whitespace-nowrap text-[55px] font-bold leading-none text-[#160a90]">公式指标网</span>
    <svg className="ml-[2px]" width="82" height="81" viewBox="0 0 82 81">
      <path d="M8 44 A33 33 0 0 1 33 6" fill="none" stroke="#d8604a" strokeWidth="9" />
      <path d="M49 6 A33 33 0 0 1 74 44" fill="none" stroke="#d8604a" strokeWidth="9" />
      <path d="M40 78 A33 33 0 0 0 74 48" fill="none" stroke="#e8c848" strokeWidth="9" />
      <rect x="26" y="18" width="30" height="24" fill="#e8c848" />
      <rect x="36" y="0" width="10" height="80" fill="#e8c848" />
      <rect x="24" y="46" width="34" height="8" fill="#e8c848" />
      <circle cx="41" cy="7" r="4" fill="#7faad9" />
      <rect x="30" y="25" width="22" height="3" fill="#7faad9" />
      <rect x="30" y="33" width="22" height="3" fill="#7faad9" />
    </svg>
    <span className="ml-[24px] whitespace-nowrap font-['DejaVu_Serif',serif] text-[53px] font-bold leading-none tracking-[-1px] text-white">www.9m8.cn</span>
  </div>
);

export default function App() {
  return (
    <div className="relative h-[1395px] w-[2160px] overflow-hidden bg-black font-['Liberation_Sans','Noto_Sans_CJK_SC',sans-serif]">
      <TopBar />
      <div className="flex h-[1323px]">
        <div className="flex w-[1787px] flex-col">
          <PeriodBar />
          <div className="relative">
            <MainLegend />
            <MainChart />
          </div>
          <div className="relative">
            <div className="absolute left-[3px] top-[2px] flex h-[22px] items-center gap-[4px] whitespace-nowrap text-[18px] text-[#b8b8b8]">
              <Dot />
              <span className="ml-[2px]">抓龙通道</span>
              <span className="ml-[4px]">选股: 0.00</span>
            </div>
            <SubChart />
          </div>
          <div className="relative">
            <div className="absolute left-[3px] top-[1px] flex h-[22px] items-center whitespace-nowrap text-[18px] text-[#b8b8b8]">
              <Dot />
              <span className="ml-[8px] flex w-[194px] items-center">
                VOLUME: 193222.28
                <Arw />
              </span>
              <span className="flex w-[154px] items-center">
                MA5: 896560.31
                <Arw />
              </span>
              <span className="flex items-center text-[#e8e800]">
                MA10: 952362.38
                <Arw />
              </span>
            </div>
            <VolumeChart />
          </div>
          <DateAxis />
          <TabRow items={tabsOne} />
          <TabRow items={tabsTwo} />
        </div>
        <QuotePanel />
        <ToolRail />
      </div>
      <StatusBar />
      <Watermark />
    </div>
  );
}
